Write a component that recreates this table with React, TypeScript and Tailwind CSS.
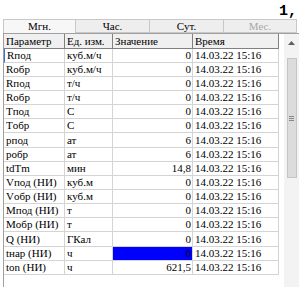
import React from "react";

const rows: [string, string, string, boolean?][] = [
  ["Rпод", "куб.м/ч", "0"],
  ["Rобр", "куб.м/ч", "0"],
  ["Rпод", "т/ч", "0"],
  ["Rобр", "т/ч", "0"],
  ["Tпод", "С", "0"],
  ["Tобр", "С", "0"],
  ["рпод", "ат", "6"],
  ["робр", "ат", "6"],
  ["tdTm", "мин", "14,8"],
  ["Vпод (НИ)", "куб.м", "0"],
  ["Vобр (НИ)", "куб.м", "0"],
  ["Mпод (НИ)", "т", "0"],
  ["Mобр (НИ)", "т", "0"],
  ["Q (НИ)", "ГКал", "0"],
  ["tнар (НИ)", "ч", "0", true],
  ["ton (НИ)", "ч", "621,5"],
];

export default function App() {
  return (
    <div
      className="w-[300px] h-[287px] bg-white relative overflow-hidden text-[11px] text-black leading-none"
      style={{ fontFamily: '"Liberation Serif", serif' }}
    >
      <div className="h-[19px] flex justify-end items-start pr-[3px] pt-[4px]">
        <span
          className="font-bold text-[15px] leading-none"
          style={{ fontFamily: '"Liberation Mono", monospace' }}
        >
          1,
        </span>
      </div>
      <div className="ml-[3px] w-[294px] h-[14px] flex">
        <div className="w-[73px] h-full flex items-center justify-center bg-[#f7f7f7] border border-[#c8c8c8] border-b-0">
          Мгн.
        </div>
        <div className="w-[74px] h-full flex items-center justify-center bg-[#eeeeee] border border-l-0 border-[#c8c8c8]">
          Час.
        </div>
        <div className="w-[74px] h-full flex items-center justify-center bg-[#eeeeee] border border-l-0 border-[#c8c8c8]">
          Сут.
        </div>
        <div className="w-[73px] h-full flex items-center justify-center bg-[#eeeeee] border border-l-0 border-[#c8c8c8] text-[#a8a8a8]">
          Мес.
        </div>
      </div>
      <div className="ml-[3px] w-[296px] h-[254px] border-l border-t border-[#a0a0a0] flex">
        <div className="w-[275px] flex flex-col">
          <div className="flex h-[15px] bg-[#f0f0f0]">
            <div className="w-[61px] flex items-center pl-[2px] border-r border-b border-[#808080]">Параметр</div>
            <div className="w-[48px] flex items-center pl-[2px] border-r border-b border-[#808080]">Ед. изм.</div>
            <div className="w-[80px] flex items-center pl-[2px] border-r border-b border-[#808080]">Значение</div>
            <div className="w-[86px] flex items-center pl-[2px] border-r border-b border-[#808080]">Время</div>
          </div>
          {rows.map(([p, u, v, sel], i) => (
            <div key={i} className={`flex ${i === 6 || i === 13 ? "h-[15px]" : "h-[14px]"}`}>
              <div
                className={`w-[61px] flex items-center pl-[2px] border-r border-b border-[#d4d4d4] ${i === 0 ? "border-l border-l-[#3a6fd8]" : ""}`}
              >
                {p}
              </div>
              <div className="w-[48px] flex items-center pl-[2px] border-r border-b border-[#d4d4d4]">{u}</div>
              <div
                className={`w-[80px] flex items-center justify-end pr-[1px] border-r border-b border-[#d4d4d4] ${sel ? "bg-[#0000ff]" : ""}`}
              >
                {v}
              </div>
              <div className="w-[86px] flex items-center pl-[2px] border-r border-b border-[#d4d4d4]">14.03.22 15:16</div>
            </div>
          ))}
        </div>
        <div className="ml-[5px] w-[15px] h-full bg-[#f3f3f3] flex flex-col items-center">
          <div className="h-[17px] flex items-center justify-center">
            <svg width="7" height="4" viewBox="0 0 7 4">
              <path d="M0 4 L3.5 0 L7 4 Z" fill="#606060" />
            </svg>
          </div>
          <div className="mt-[7px] w-[10px] h-[120px] bg-[#dcdcdc] border border-[#c4c4c4] flex items-center justify-center">
            <div className="flex flex-col gap-[1px]">
              <div className="w-[5px] h-px bg-[#888]" />
              <div className="w-[5px] h-px bg-[#888]" />
              <div className="w-[5px] h-px bg-[#888]" />
            </div>
          </div>
        </div>
      </div>
    </div>
  );
}
